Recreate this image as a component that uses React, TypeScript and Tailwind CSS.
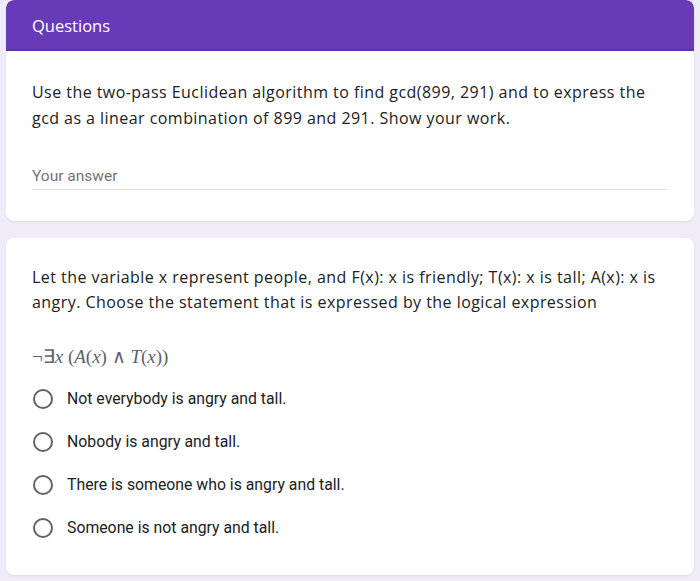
import React from "react";

const options = [
  "Not everybody is angry and tall.",
  "Nobody is angry and tall.",
  "There is someone who is angry and tall.",
  "Someone is not angry and tall.",
];

export default function App() {
  return (
    <div className="w-[700px] h-[581px] bg-[#efebf8] px-[6px] overflow-hidden">
      <div className="bg-white rounded-[8px] shadow-[0_1px_2px_rgba(0,0,0,0.08)] h-[221px] overflow-hidden">
        <div className="h-[51px] bg-[#673ab7] border-b-2 border-[#5e35a8] rounded-t-[8px] flex items-center pl-[26px] pt-[3px] text-white text-[16.5px] font-['Open_Sans',sans-serif]">
          Questions
        </div>
        <div className="pl-[26px] pr-[20px] pt-[28px] text-[#202124] text-[16px] tracking-[0.45px] leading-[26px] font-['Open_Sans',sans-serif]">
          Use the two-pass Euclidean algorithm to find gcd(899, 291) and to express the gcd as a linear combination of 899 and 291. Show your work.
        </div>
        <div className="ml-[26px] mr-[27px] mt-[34px] border-b border-[#e0e0e0] pb-[1px] text-[#70757a] text-[15.5px] font-['Roboto',sans-serif]">
          Your answer
        </div>
      </div>
      <div className="mt-[17px] bg-white rounded-[8px] shadow-[0_1px_2px_rgba(0,0,0,0.08)] h-[337px] pl-[26px] pt-[27px]">
        <div className="pr-[20px] text-[#202124] text-[16px] tracking-[0.45px] leading-[25px] font-['Open_Sans',sans-serif]">
          Let the variable x represent people, and F(x): x is friendly; T(x): x is tall; A(x): x is angry. Choose the statement that is expressed by the logical expression
        </div>
        <div className="mt-[28px] text-[#5f6368] text-[19px] font-['Liberation_Serif',serif]">
          ¬∃<i>x</i> (<i>A</i>(<i>x</i>) ∧ <i>T</i>(<i>x</i>))
        </div>
        <div className="mt-[17px] flex flex-col gap-[23px]">
          {options.map((o) => (
            <div key={o} className="flex items-center h-[20px]">
              <div className="w-[20px] h-[20px] rounded-full border-2 border-[#5f6368] ml-[1px]" />
              <span className="ml-[14px] text-[#202124] text-[15.8px] font-['Roboto',sans-serif]">{o}</span>
            </div>
          ))}
        </div>
      </div>
    </div>
  );
}
